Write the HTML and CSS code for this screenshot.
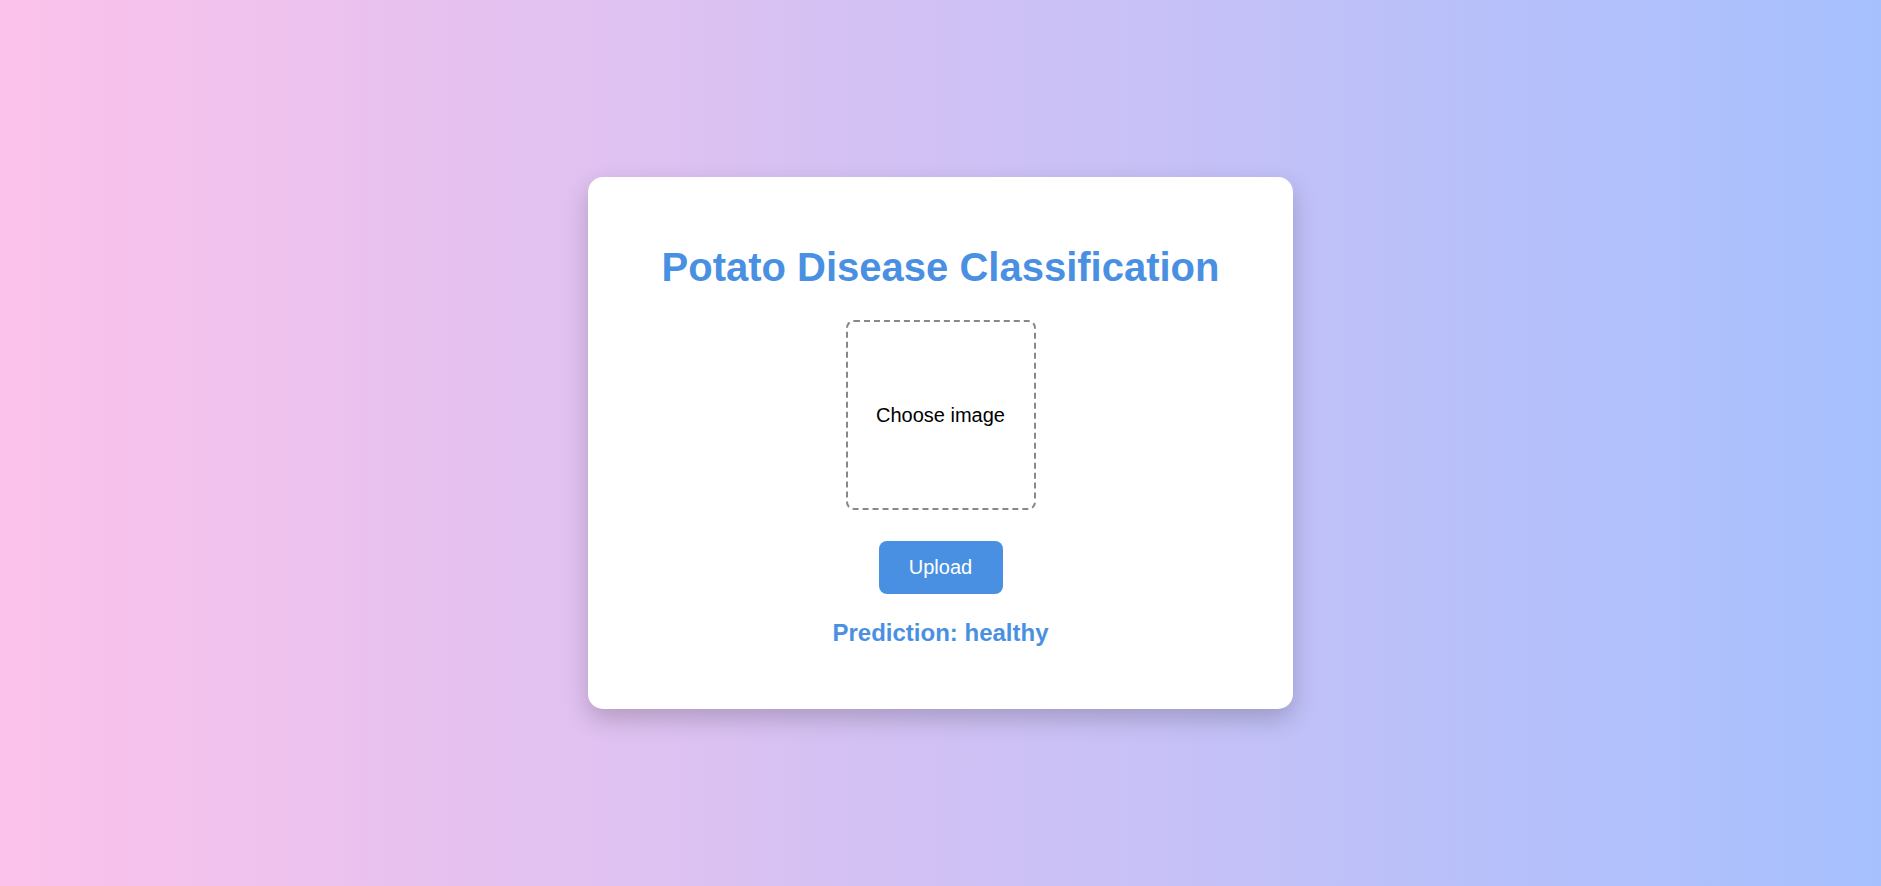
FILE: index.html
```html
<!DOCTYPE html>
<html>
<head>
<meta charset="utf-8">
<link rel="stylesheet" href="styles.css">
</head>
<body>
<div class="page">
  <div class="card">
    <h1 class="title">Potato Disease Classification</h1>
    <label class="drop">Choose image</label>
    <button class="upload">Upload</button>
    <div class="prediction">Prediction: healthy</div>
  </div>
</div>
</body>
</html>
```
FILE: styles.css
```css
html, body {
  margin: 0;
  padding: 0;
  height: 100%;
}
body {
  font-family: "Liberation Sans", Arial, sans-serif;
  background: linear-gradient(to right, #fbc2eb, #a6c0fe);
}
.page {
  height: 100vh;
  display: flex;
  align-items: center;
  justify-content: center;
}
.card {
  width: 705px;
  box-sizing: border-box;
  background: #fff;
  border-radius: 15px;
  box-shadow: 0 10px 25px rgba(0, 0, 0, 0.2);
  padding: 66px 40px 62px;
  display: flex;
  flex-direction: column;
  align-items: center;
}
.title {
  margin: 0;
  font-size: 40px;
  font-weight: bold;
  color: #4a90e2;
  line-height: 48px;
}
.drop {
  margin-top: 29px;
  width: 190px;
  height: 190px;
  box-sizing: border-box;
  border: 2px dashed #888;
  border-radius: 8px;
  display: flex;
  align-items: center;
  justify-content: center;
  font-size: 20px;
  color: #000;
}
.upload {
  margin-top: 31px;
  width: 124px;
  height: 53px;
  border: none;
  border-radius: 8px;
  background: #4a90e2;
  color: #fff;
  font-family: "Liberation Sans", Arial, sans-serif;
  font-size: 20px;
}
.prediction {
  margin-top: 25px;
  font-size: 24px;
  line-height: 28px;
  font-weight: bold;
  color: #4a90e2;
}
```
